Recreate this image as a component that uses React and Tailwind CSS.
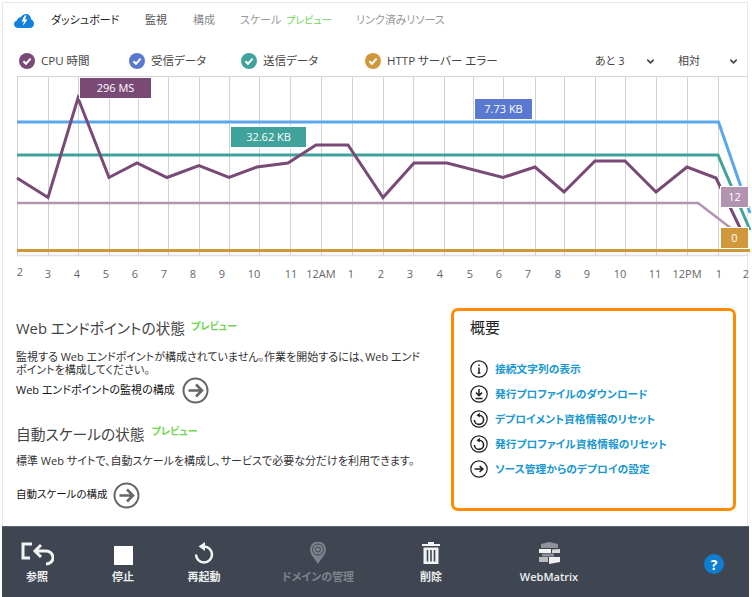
import { ChevronDown } from 'lucide-react';

const font = 'font-["Open_Sans","Noto_Sans_CJK_JP",sans-serif] [font-feature-settings:"palt"]';

// Chart data, in page pixels
const gridX = [17, 48, 78, 109, 138, 168, 199, 229, 259, 290, 321, 352, 383, 413, 444, 473, 503, 535, 564, 595, 625, 656, 687, 718];
const cpuPoints = '17,178 48,197.5 78,98 109,177.5 137,163 167,177.5 199,165.5 229,177.5 257,167 288,163 316,145 348,145 383,197.5 414,163 447,163 503,177.5 535,167 564,192 595,161 625,161 656,192 687,167 716,178 742,232';

const axisLabels = [
  ['2', 20, 271], ['3', 48, 273], ['4', 77, 273], ['5', 106, 273], ['6', 135, 273], ['7', 164, 273], ['8', 193, 273],
  ['9', 222, 273], ['10', 254, 273], ['11', 291, 273], ['12AM', 321, 273], ['1', 351, 273], ['2', 381, 273], ['3', 410, 273],
  ['4', 440, 273], ['5', 470, 273], ['6', 499, 273], ['7', 528, 273], ['8', 558, 273], ['9', 587, 273], ['10', 620, 273],
  ['11', 655, 273], ['12PM', 687, 273], ['1', 719, 273], ['2', 746, 273],
];

function Check({ color }) {
  return (
    <svg width="16" height="16" viewBox="0 0 16 16" className="shrink-0">
      <circle cx="8" cy="8" r="8" fill={color} />
      <path d="M4.4 8.2 7 10.8 11.6 5.6" fill="none" stroke="#fff" strokeWidth="2" />
    </svg>
  );
}

function Legend({ color, label, width }) {
  return (
    <div className={`flex items-center gap-[6px] ${width}`}>
      <Check color={color} />
      <span className="text-[11.5px] text-[#444]">{label}</span>
    </div>
  );
}

function Preview({ className = '' }) {
  return <span className={`text-[10px] font-bold text-[#6fd64f] ${className}`}>プレビュー</span>;
}

function ArrowCircle() {
  return (
    <svg width="27" height="27" viewBox="0 0 27 27" className="shrink-0">
      <circle cx="13.5" cy="13.5" r="12" fill="none" stroke="#666" strokeWidth="2" />
      <path d="M6.5 13.5H19.5M14 7.5 20 13.5 14 19.5" fill="none" stroke="#666" strokeWidth="2.6" />
    </svg>
  );
}

function SmallIcon({ children }) {
  return (
    <svg width="18" height="18" viewBox="0 0 18 18" className="shrink-0">
      <circle cx="9" cy="9" r="8.2" fill="none" stroke="#222" strokeWidth="1.2" />
      {children}
    </svg>
  );
}

const resetIcon = (
  <>
    <path d="M9 5.2A4.6 4.6 0 1 1 4.4 10" fill="none" stroke="#222" strokeWidth="1.6" />
    <path d="M9.8 2.800 6.400 5.200 9.800 7.600Z" fill="#222" />
  </>
);

const links = [
  ['接続文字列の表示', <path key="i" d="M9 7.5V13M7.6 13H10.4M9 4.4V6" fill="none" stroke="#222" strokeWidth="1.5" />],
  ['発行プロファイルのダウンロード', <path key="d" d="M9 4V10M6 7.6 9 10.6 12 7.6M5.5 13.4H12.5" fill="none" stroke="#222" strokeWidth="1.5" />],
  ['デプロイメント資格情報のリセット', resetIcon],
  ['発行プロファイル資格情報のリセット', resetIcon],
  ['ソース管理からのデプロイの設定', <path key="a" d="M4.6 9H12.4M9.6 6 12.8 9 9.6 12" fill="none" stroke="#222" strokeWidth="1.6" />],
];

function ChartTag({ className, children }) {
  return (
    <div className={`absolute flex items-center justify-center text-[11px] text-white h-[20px] shadow-[0_0_0_1px_#fff] ${className}`}>
      {children}
    </div>
  );
}

function FooterItem({ label, width, dim, children }) {
  return (
    <div className={`flex flex-col items-center ${width}`}>
      <div className="h-[26px] flex items-center justify-center">{children}</div>
      <span className={`mt-[3px] text-[11px] font-semibold leading-[16px] ${dim ? 'text-[#7d838b]' : 'text-[#eceef0]'}`}>
        {label}
      </span>
    </div>
  );
}

export default function App() {
  return (
    <div className={`${font} w-[752px] h-[597px] overflow-hidden bg-white flex flex-col`}>
      {/* Page frame */}
      <div className="flex-1 ml-[2px] mr-[4px] mt-[2px] border-l border-t border-r border-[#e8e8e8] relative flex flex-col">
        {/* Top navigation */}
        <div className="h-[31px] mt-[2px] flex items-center text-[11px] text-[#999] pl-[11px]">
          <svg width="20" height="14" viewBox="0 0 20 14" className="mr-[17px]">
            <path d="M4.500 14C2 14 0 12.600 0 10.200C0 8 1.500 6.800 3 6.500C3.300 4.500 4.800 3.200 6.800 3.300C7.800 1.300 9.800 0 12 0C15 0 16.800 2.200 17 5.200C18.800 6 20 7.600 20 9.800C20 12.400 18.200 14 15.800 14Z" fill="#1380dc" />
            <path d="M10.500 1.500 7.500 7.500H10L8.800 12 13.500 5.500H11L12.500 1.500Z" fill="#fff" />
          </svg>
          <span className="text-[#222] w-[94px]">ダッシュボード</span>
          <span className="text-[#555] w-[48px]">監視</span>
          <span className="text-[#888] w-[47px]">構成</span>
          <span className="w-[116px]">スケール <Preview className="font-normal ml-[2px]" /></span>
          <span>リンク済みリソース</span>
        </div>

        {/* Legend and dropdowns */}
        <div className="h-[26px] mt-[12px] flex items-center pl-[16px]">
          <Legend color="#7a4a77" label="CPU 時間" width="w-[110px]" />
          <Legend color="#5b78d0" label="受信データ" width="w-[112px]" />
          <Legend color="#3fa39b" label="送信データ" width="w-[124px]" />
          <Legend color="#d1983b" label="HTTP サーバー エラー" width="w-[230px]" />
          <span className="text-[11px] text-[#444] w-[50px]">あと 3</span>
          <ChevronDown size={11} strokeWidth={3.5} className="text-[#444] mr-[22px]" />
          <span className="text-[11px] text-[#444] w-[50px]">相対</span>
          <ChevronDown size={11} strokeWidth={3.5} className="text-[#444]" />
        </div>

        {/* Chart drawing, coordinates are page pixels */}
        <div className="relative h-[204px] mt-[2px] -ml-[3px] w-[752px]">
          <svg width="752" height="204" viewBox="0 76 752 204" className="block">
            <path d="M17 76.500H748" stroke="#d4d4d4" strokeWidth="1" />
            <path d="M17 255.500H748" stroke="#e0e0e0" strokeWidth="1.5" />
            {gridX.map((x) => (
              <line key={x} x1={x + 0.5} x2={x + 0.5} y1="76" y2="256" stroke="#d2d2d2" strokeWidth="1" />
            ))}
            <polyline points="17,122 718.500,122 750,213" fill="none" stroke="#5aa7ec" strokeWidth="3" />
            <polyline points="17,155 718,155 750,230" fill="none" stroke="#3fa39b" strokeWidth="3" />
            <polyline points="17,203 698,203 732,229" fill="none" stroke="#b294b0" strokeWidth="2.5" />
            <line x1="17" x2="750" y1="250.500" y2="250.500" stroke="#d1983b" strokeWidth="3" />
            <polyline points={cpuPoints} fill="none" stroke="#7a4a77" strokeWidth="3" />
          </svg>
          <ChartTag className="left-[80px] top-[2px] w-[71px] bg-[#7a4a77]">296 MS</ChartTag>
          <ChartTag className="left-[475px] top-[23px] w-[57px] bg-[#5b78d0]">7.73 KB</ChartTag>
          <ChartTag className="left-[231px] top-[51px] w-[75px] bg-[#3fa39b]">32.62 KB</ChartTag>
          <ChartTag className="left-[721px] top-[111px] w-[27px] bg-[#b294b0]">12</ChartTag>
          <ChartTag className="left-[721px] top-[152px] w-[27px] bg-[#d1983b]">0</ChartTag>
          {axisLabels.map(([text, x, y]) => (
            <span
              key={`${text}-${x}`}
              className="absolute -translate-x-1/2 -translate-y-1/2 text-[11px] leading-none text-[#666]"
              style={{ left: x, top: y - 76 }}
            >
              {text}
            </span>
          ))}
        </div>

        {/* Lower content */}
        <div className="flex mt-[36px] pl-[13px]">
          <div className="w-[405px]">
            <div className="flex items-start h-[24px]">
              <h2 className="text-[14.75px] leading-[24px] text-[#444]">Web エンドポイントの状態</h2>
              <Preview className="ml-[6px] leading-[20px]" />
            </div>
            <p className="mt-[10px] text-[11px] leading-[13px] text-[#333]">
              監視する Web エンドポイントが構成されていません。作業を開始するには、Web エンドポイントを構成してください。
            </p>
            <div className="mt-0 flex items-center gap-[7px] h-[28px]">
              <span className="text-[11px] text-[#111]">Web エンドポイントの監視の構成</span>
              <ArrowCircle />
            </div>
            <div className="flex items-start h-[24px] mt-[18px]">
              <h2 className="text-[14.75px] leading-[24px] text-[#444]">自動スケールの状態</h2>
              <Preview className="ml-[7px] leading-[19px]" />
            </div>
            <p className="mt-[8px] text-[11px] leading-[13px] text-[#333]">
              標準 Web サイトで、自動スケールを構成し、サービスで必要な分だけを利用できます。
            </p>
            <div className="mt-[14px] flex items-center gap-[5px] h-[28px]">
              <span className="text-[10.5px] text-[#111]">自動スケールの構成</span>
              <ArrowCircle />
            </div>
          </div>

          {/* Overview box */}
          <div className="ml-[30px] -mt-[8px] w-[285px] h-[203px] border-[3px] border-[#ff8c00] rounded-[7px] pl-[16px] pt-[5px]">
            <h2 className="text-[15px] leading-[22px] text-[#222]">概要</h2>
            <ul className="mt-[22px] flex flex-col gap-[7px]">
              {links.map(([label, icon]) => (
                <li key={label} className="flex items-center gap-[7px] h-[18px]">
                  <SmallIcon>{icon}</SmallIcon>
                  <span className="text-[10.75px] font-semibold text-[#1a98cf]">{label}</span>
                </li>
              ))}
            </ul>
          </div>
        </div>
      </div>

      {/* Bottom command bar */}
      <div className="h-[71px] ml-[2px] mr-[3px] bg-[#3f4651] border-t border-[#5c626b] flex items-start pt-[13px]">
        <FooterItem label="参照" width="w-[70px]">
          <svg width="34" height="26" viewBox="0 0 34 26">
            <path d="M12 4H3V18H10M21 5 15 11 21 17M15 11H26C31 11 33 15 33 18C33 21 30 24 26 24" fill="none" stroke="#f2f3f4" strokeWidth="3" />
          </svg>
        </FooterItem>
        <FooterItem label="停止" width="w-[102px]">
          <div className="w-[19px] h-[19px] bg-white mt-[4px]" />
        </FooterItem>
        <FooterItem label="再起動" width="w-[60px]">
          <svg width="20" height="22" viewBox="0 0 20 22">
            <path d="M10 4.500A8 8 0 1 1 2 12.500" fill="none" stroke="#f2f3f4" strokeWidth="2.500" />
            <path d="M11 0 4.500 4.500 11 9Z" fill="#f2f3f4" />
          </svg>
        </FooterItem>
        <FooterItem label="ドメインの管理" width="w-[168px]" dim>
          <svg width="16" height="22" viewBox="0 0 16 22">
            <path d="M8 22C5.500 17 0 13 0 7.500A8 8 0 0 1 16 7.500C16 13 10.500 17 8 22Z" fill="#7d838b" />
            <circle cx="8" cy="7.500" r="5.500" fill="none" stroke="#3f4651" strokeWidth="1" />
            <circle cx="8" cy="7.500" r="2.500" fill="none" stroke="#3f4651" strokeWidth="1" />
          </svg>
        </FooterItem>
        <FooterItem label="削除" width="w-[58px]">
          <svg width="18" height="22" viewBox="0 0 18 22">
            <path d="M6 1H12M0 3H18" stroke="#f2f3f4" strokeWidth="2" fill="none" />
            <path d="M1.500 5.500H16.500V22H1.500Z" fill="#f2f3f4" />
            <path d="M5.500 8V19.500M9 8V19.500M12.500 8V19.500" stroke="#3f4651" strokeWidth="1.600" />
          </svg>
        </FooterItem>
        <FooterItem label="WebMatrix" width="w-[178px]">
          <svg width="21" height="22" viewBox="0 0 21 22">
            <path d="M2 2 10 0 19 2V6H2Z" fill="#8f9298" />
            <path d="M0 7H12V11H0Z" fill="#f4f4f4" />
            <path d="M13 7.500 21 7V11H13Z" fill="#d9dadb" />
            <path d="M3 11.500H15V14.500H3Z" fill="#8d9096" />
            <path d="M0 15H9V20H0Z" fill="#b9bbbe" />
            <path d="M10 15H21V20L10 22Z" fill="#f0f0f0" />
          </svg>
        </FooterItem>
        <div className="ml-[66px] mt-[14px] w-[20px] h-[20px] rounded-full bg-[#0f7ed0] flex items-center justify-center text-[14px] font-bold text-white">
          ?
        </div>
      </div>
    </div>
  );
}
